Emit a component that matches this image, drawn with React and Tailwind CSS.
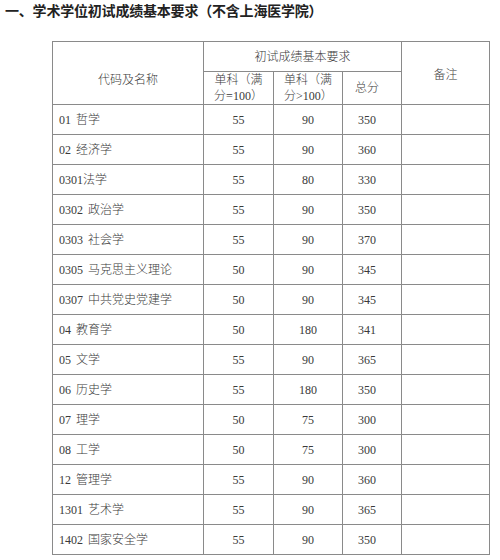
const rows = [
  ["01", "哲学", 55, 90, 350],
  ["02", "经济学", 55, 90, 360],
  ["0301", "法学", 55, 80, 330, true],
  ["0302", "政治学", 55, 90, 350],
  ["0303", "社会学", 55, 90, 370],
  ["0305", "马克思主义理论", 50, 90, 345],
  ["0307", "中共党史党建学", 50, 90, 345],
  ["04", "教育学", 50, 180, 341],
  ["05", "文学", 55, 90, 365],
  ["06", "历史学", 55, 180, 350],
  ["07", "理学", 50, 75, 300],
  ["08", "工学", 50, 75, 300],
  ["12", "管理学", 55, 90, 360],
  ["1301", "艺术学", 55, 90, 365],
  ["1402", "国家安全学", 55, 90, 350],
];

const cell = "border border-[#8a8a8a] p-0";

export default function App() {
  return (
    <div className="w-[500px] h-[560px] bg-white overflow-hidden">
      <h1 className="pl-[5px] text-[14px] leading-[21px] font-bold tracking-[-0.2px] text-[#222] [font-family:'Noto_Sans_CJK_SC',sans-serif]">
        一、学术学位初试成绩基本要求（不含上海医学院）
      </h1>

      <table className="mt-[20px] ml-[52px] border-collapse table-fixed text-[12px] text-[#3a3a3a] font-light [font-family:'Liberation_Serif','Noto_Sans_CJK_SC',serif]">
        <colgroup>
          <col className="w-[151px]" />
          <col className="w-[70px]" />
          <col className="w-[69px]" />
          <col className="w-[59px]" />
          <col className="w-[88px]" />
        </colgroup>
        <thead>
          <tr className="h-[30px]">
            <th rowSpan={2} className={`${cell} font-light text-center align-middle pt-[14px]`}>
              代码及名称
            </th>
            <th colSpan={3} className={`${cell} font-light text-center`}>
              初试成绩基本要求
            </th>
            <th rowSpan={2} className={`${cell} font-light text-center pt-[4px]`}>
              备注
            </th>
          </tr>
          <tr className="h-[33px]">
            <th className={`${cell} font-light leading-[16px] px-[10px]`}>单科（满分=100）</th>
            <th className={`${cell} font-light leading-[16px] px-[10px]`}>单科（满分&gt;100）</th>
            <th className={`${cell} font-light pr-[10px]`}>总分</th>
          </tr>
        </thead>
        <tbody>
          {rows.map(([code, name, a, b, total, tight]) => (
            <tr key={code} className="h-[30px]">
              <td className={`${cell} pl-[6px]`}>
                {code}
                <span className={tight ? "" : "ml-[5px]"}>{name}</span>
              </td>
              <td className={`${cell} text-center`}>{a}</td>
              <td className={`${cell} text-center`}>{b}</td>
              <td className={`${cell} text-center pr-[10px]`}>{total}</td>
              <td className={cell}></td>
            </tr>
          ))}
        </tbody>
      </table>
    </div>
  );
}
